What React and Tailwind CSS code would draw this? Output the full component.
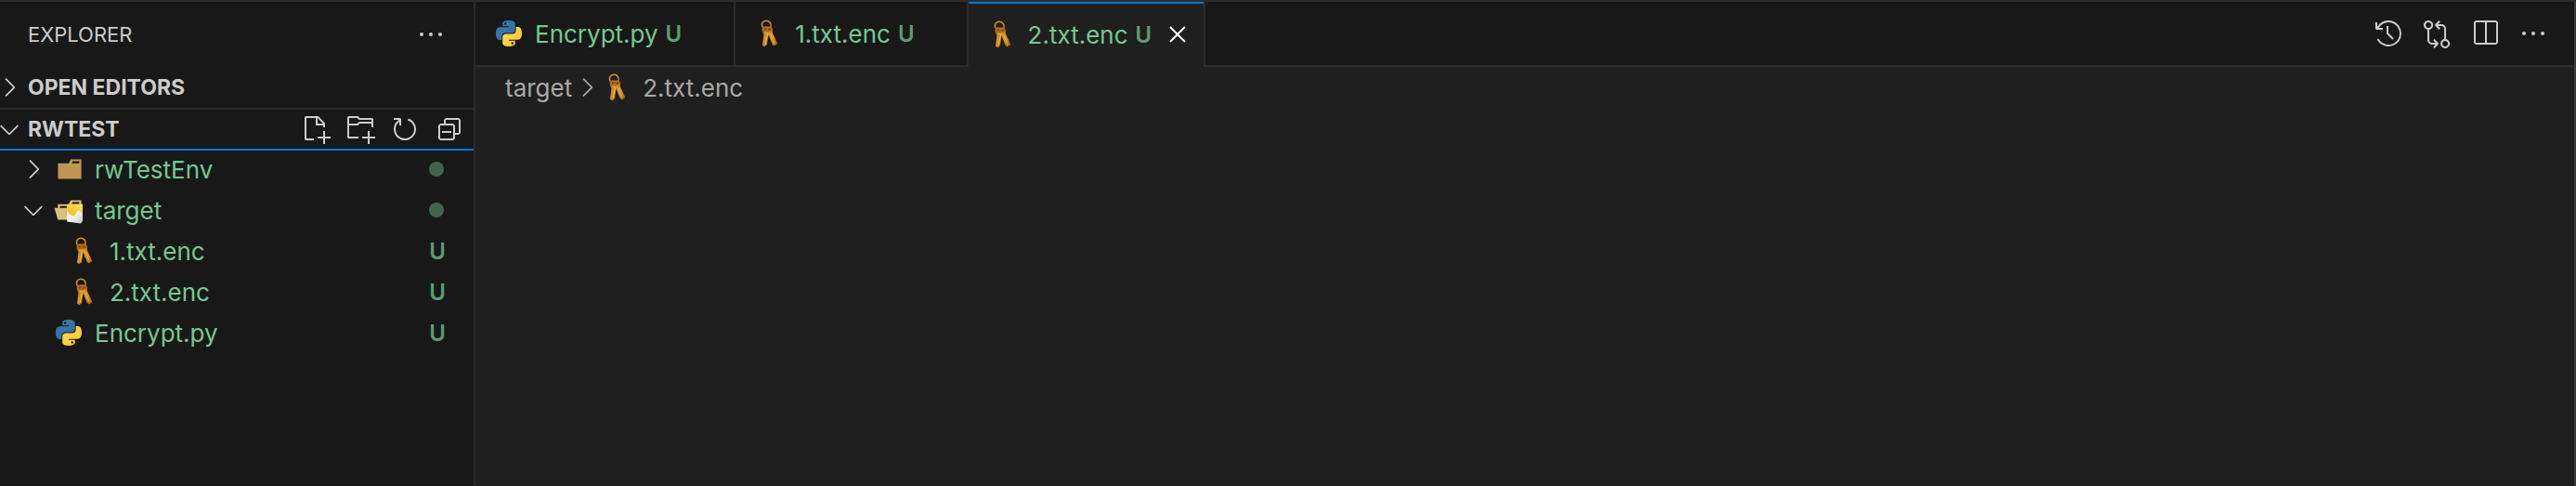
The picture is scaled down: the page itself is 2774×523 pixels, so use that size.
import {
  VscChevronDown,
  VscChevronRight,
  VscClose,
  VscCollapseAll,
  VscEllipsis,
  VscGitCompare,
  VscHistory,
  VscNewFile,
  VscNewFolder,
  VscRefresh,
  VscSplitHorizontal,
} from 'react-icons/vsc';

const tree = [
  { name: 'rwTestEnv', icon: 'folder', depth: 0, expanded: false },
  { name: 'target', icon: 'folderOpen', depth: 0, expanded: true },
  { name: '1.txt.enc', icon: 'key', depth: 1 },
  { name: '2.txt.enc', icon: 'key', depth: 1 },
  { name: 'Encrypt.py', icon: 'python', depth: 0 },
];

const tabs = [
  { name: 'Encrypt.py', icon: 'python' },
  { name: '1.txt.enc', icon: 'key' },
  { name: '2.txt.enc', icon: 'key', active: true },
];

function PythonIcon() {
  return (
    <svg viewBox="0 0 32 32" className="size-8 shrink-0" aria-hidden="true">
      <defs>
        <linearGradient id="pyBlue" x1="0" y1="0" x2="1" y2="1">
          <stop offset="0" stopColor="#387eb8" />
          <stop offset="1" stopColor="#366994" />
        </linearGradient>
        <linearGradient id="pyYellow" x1="0" y1="0" x2="1" y2="1">
          <stop offset="0" stopColor="#ffe052" />
          <stop offset="1" stopColor="#ffc331" />
        </linearGradient>
      </defs>
      <path
        fill="url(#pyBlue)"
        d="M15.885 2.1c-7.1 0-6.651 3.07-6.651 3.07V8.36h6.752v1H6.545S2 8.8 2 16.005s4.013 6.912 4.013 6.912H8.33v-3.361s-.13-4.013 3.9-4.013h6.762s3.772.06 3.772-3.652V5.8s.572-3.712-6.842-3.712zM12.153 4.237a1.214 1.214 0 1 1-1.183 1.244v-.02a1.214 1.214 0 0 1 1.214-1.214z"
      />
      <path
        fill="url(#pyYellow)"
        d="M16.085 29.91c7.1 0 6.651-3.08 6.651-3.08v-3.18h-6.751v-1h9.47S30 23.158 30 15.995s-4.013-6.912-4.013-6.912H23.64V12.4s.13 4.013-3.9 4.013h-6.765S9.2 16.356 9.2 20.068V26.2s-.572 3.712 6.842 3.712zm3.732-2.147A1.214 1.214 0 1 1 21 26.519v.03a1.214 1.214 0 0 1-1.214 1.214z"
      />
    </svg>
  );
}

function KeyIcon() {
  return (
    <svg viewBox="0 0 32 32" className="size-8 shrink-0" aria-hidden="true">
      <defs>
        <linearGradient id="keyGold" x1="0" y1="0" x2="1" y2="1">
          <stop offset="0" stopColor="#c98222" />
          <stop offset="0.5" stopColor="#d4912a" />
          <stop offset="1" stopColor="#96520a" />
        </linearGradient>
      </defs>
      <path
        fill="none"
        stroke="#d3932b"
        strokeWidth="1.5"
        d="M9.4 9.6C7 5.6 9.6 2.2 13 2.2s6.2 3 5 7.4"
      />
      <path fill="#b26a18" d="M8.6 10.6l2.4-2.4 7.4.2 1.8 3.4-.5 4.2-3.7 2.4-5.6-1.2-1.6-3.6z" />
      <path fill="url(#keyGold)" d="M14.4 14.6l4.4-1.6 6.6 14-3.6 2.6-2-1.6z" />
      <path fill="url(#keyGold)" d="M10.8 14.6l5 1-1.8 12.6-2.6 2-2.4-1.4z" />
      <path fill="none" stroke="#efbd4c" strokeWidth="1" d="M14.6 16.5l-2.6 11.6M17.6 16.2l4.6 10.6" />
      <path fill="#7d470d" d="M11 10.6h2.2v1.6H11zM15.4 10.6l3 .5-.5 1.7-2.7-.4z" />
      <path fill="#e0a233" d="M11 14.2l6 .8-.4 1.4-5-.6z" />
    </svg>
  );
}

function FolderIcon() {
  return (
    <svg viewBox="0 0 32 32" className="size-8 shrink-0" aria-hidden="true">
      <path fill="#c09553" d="M27.5 5.5h-9.3l-2.1 4.2H4.4v16.8h25.2V5.5zm0 4.2h-8.2l1.1-2.1h7.1z" />
    </svg>
  );
}

function FolderOpenIcon() {
  return (
    <svg viewBox="0 0 32 32" className="size-8 shrink-0" aria-hidden="true">
      <defs>
        <linearGradient id="mailFlap" x1="1" y1="0" x2="0" y2="1">
          <stop offset="0" stopColor="#ffe45a" />
          <stop offset="1" stopColor="#fbb81f" />
        </linearGradient>
        <linearGradient id="mailBody" x1="0" y1="0" x2="1" y2="1">
          <stop offset="0.5" stopColor="#f6f6f6" />
          <stop offset="1" stopColor="#c4c4c4" />
        </linearGradient>
      </defs>
      <path
        fill="#d9bf7d"
        d="M27.4 5.5h-9.2l-2.1 4.2H4.3v4H.5l3.8 12.8h25.2v-21zM6.6 13.7v-1.9h20.8v1.9zm20.8-4h-8.2l1-2.1h7.2z"
      />
      <path fill="url(#mailBody)" d="M14.2 11H31v17l-2.2 2.4-14.6-1.8z" />
      <path
        fill="url(#mailFlap)"
        d="M14.2 10.6l1.4-1.2H31v11.4c-1.6-1-2.6-4.4-4.6-4.4-2 0-2.6 6-5.4 6-2.8 0-4.4-4.4-6.8-5z"
      />
    </svg>
  );
}

const icons = {
  python: PythonIcon,
  key: KeyIcon,
  folder: FolderIcon,
  folderOpen: FolderOpenIcon,
};

function IconButton({ icon: Icon, label }) {
  return (
    <button type="button" aria-label={label} className="size-8 shrink-0 text-[#cccccc]">
      <Icon className="size-8" />
    </button>
  );
}

function TreeRow({ item }) {
  const Icon = icons[item.icon];
  const isFolder = item.expanded !== undefined;
  const Chevron = item.expanded ? VscChevronDown : VscChevronRight;

  return (
    <li>
      <button
        type="button"
        className={`flex h-11 w-full items-center pr-[30px] text-left text-[#73c991] ${item.depth ? 'pl-9' : 'pl-5'}`}
      >
        <span className="flex w-[38px] shrink-0 text-[#cccccc]">
          {isFolder && <Chevron className="size-8" />}
        </span>
        <Icon />
        <span className="ml-3 flex-1 truncate pt-0.5">{item.name}</span>
        {isFolder ? (
          <span className="mr-0.5 size-4 rounded-full bg-[#41634c]" />
        ) : (
          <span className="pt-0.5 text-2xl font-semibold text-[#5c9c72]">U</span>
        )}
      </button>
    </li>
  );
}

function Sidebar() {
  return (
    <aside className="w-128 shrink-0 border-r-2 border-[#2b2b2b] bg-[#181818] text-[#cccccc]">
      <header className="flex h-[70px] items-center justify-between px-[30px]">
        <h2 className="text-[22px]">EXPLORER</h2>
        <IconButton icon={VscEllipsis} label="Views and More Actions" />
      </header>

      <button type="button" className="flex h-11 w-full items-center text-[23px] font-bold">
        <VscChevronRight className="-ml-1.5 size-8 shrink-0" />
        <span className="ml-1">OPEN EDITORS</span>
      </button>

      <div className="flex h-11 items-center border-t-2 border-[#2b2b2b] pr-2.5">
        <button type="button" className="flex flex-1 items-center text-[23px] font-bold">
          <VscChevronDown className="-ml-1.5 size-8 shrink-0" />
          <span className="ml-1">RWTEST</span>
        </button>
        <div className="flex gap-4">
          <IconButton icon={VscNewFile} label="New File" />
          <IconButton icon={VscNewFolder} label="New Folder" />
          <IconButton icon={VscRefresh} label="Refresh Explorer" />
          <IconButton icon={VscCollapseAll} label="Collapse Folders" />
        </div>
      </div>

      <ul className="shadow-[inset_0_2px_0_#0078d4]">
        {tree.map((item) => (
          <TreeRow key={item.name} item={item} />
        ))}
      </ul>
    </aside>
  );
}

function Tab({ tab }) {
  const Icon = icons[tab.icon];

  return (
    <div
      className={`flex items-center border-r-2 border-r-[#2b2b2b] pl-5 ${
        tab.active
          ? 'bg-[#1f1f1f] pr-3 shadow-[inset_0_2px_0_#0078d4]'
          : 'border-b-2 border-b-[#2b2b2b] pr-14'
      }`}
    >
      <button type="button" role="tab" aria-selected={!!tab.active} className="flex items-center text-[#73c991]">
        <Icon />
        <span className="ml-3 pt-0.5">{tab.name}</span>
        <span className="ml-2 pt-0.5 text-2xl font-semibold text-[#5c9c72]">U</span>
      </button>
      {tab.active && (
        <button type="button" aria-label="Close" className="ml-3 text-white">
          <VscClose className="size-8" />
        </button>
      )}
    </div>
  );
}

export default function App() {
  return (
    <div className="flex min-h-screen border-t-2 border-[#2b2b2b] bg-[#1f1f1f] font-['Inter',sans-serif] text-[26px] leading-8">
      <Sidebar />

      <main className="min-w-0 flex-1 border-r-2 border-[#3a3a3a]">
        <div className="flex h-[70px] bg-[#181818]">
          <div role="tablist" className="flex">
            {tabs.map((tab) => (
              <Tab key={tab.name} tab={tab} />
            ))}
          </div>
          <div className="flex flex-1 items-center justify-end gap-5 border-b-2 border-[#2b2b2b] pr-7">
            <IconButton icon={VscHistory} label="Timeline" />
            <IconButton icon={VscGitCompare} label="Open Changes" />
            <IconButton icon={VscSplitHorizontal} label="Split Editor" />
            <IconButton icon={VscEllipsis} label="More Actions" />
          </div>
        </div>

        <nav aria-label="Breadcrumb" className="flex h-11 items-center pl-8 text-[#a9a9a9]">
          <a href="#target" className="pt-0.5">
            target
          </a>
          <VscChevronRight className="size-8" />
          <KeyIcon />
          <a href="#file" className="ml-3 pt-0.5">
            2.txt.enc
          </a>
        </nav>
      </main>
    </div>
  );
}
